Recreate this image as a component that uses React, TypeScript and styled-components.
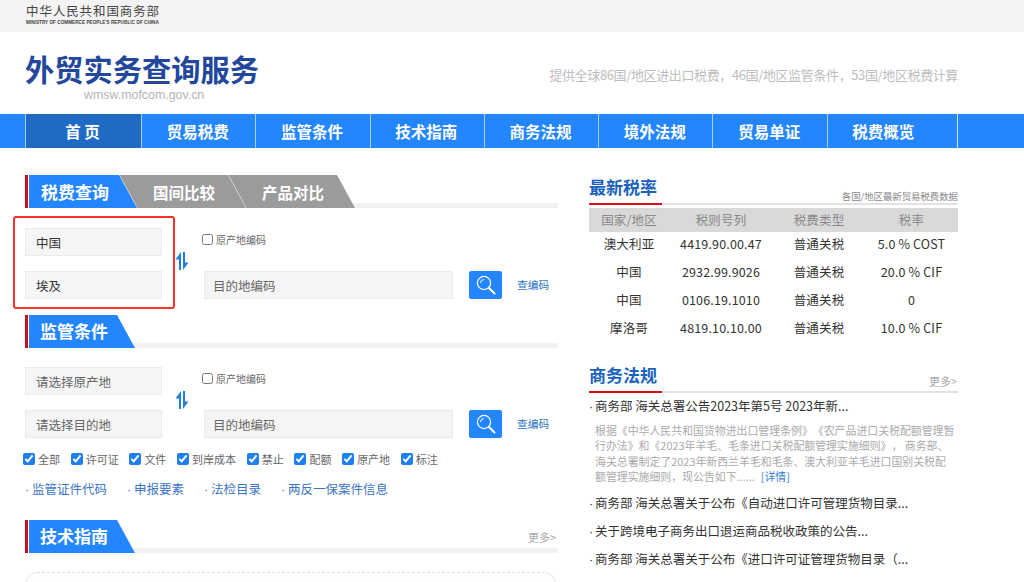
import React from "react";
import styled, { createGlobalStyle } from "styled-components";

const Global = createGlobalStyle`
  html, body { margin: 0; padding: 0; height: 582px; overflow: hidden; background: #fff; }
  body { font-family: "Noto Sans CJK SC", "Liberation Sans", sans-serif; color: #333; text-spacing-trim: space-all; }
  * { box-sizing: border-box; }
`;

const Page = styled.div`
  position: relative;
  width: 1024px;
  height: 582px;
  overflow: hidden;
`;

const TopBar = styled.div`
  height: 32px;
  background: #f3f3f3;
  padding: 3px 0 0 26px;
`;
const MinistryName = styled.div`
  font-size: 12.5px;
  line-height: 15px;
  letter-spacing: 0.9px;
  color: #444;
  white-space: nowrap;
`;
const MinistrySub = styled.div`
  font-family: "Liberation Sans", sans-serif;
  font-size: 4.7px;
  line-height: 8px;
  margin-top: 1px;
  font-weight: 700;
  color: #444;
  white-space: nowrap;
`;

const Header = styled.header`
  height: 82px;
  width: 958px;
  padding-left: 25px;
  display: flex;
  justify-content: space-between;
`;
const Brand = styled.div`
  padding-top: 17px;
`;
const BrandTitle = styled.div`
  font-size: 29.25px;
  line-height: 38px;
  font-weight: 700;
  color: #22479b;
  white-space: nowrap;
`;
const BrandUrl = styled.div`
  font-family: "Liberation Sans", sans-serif;
  font-size: 12.4px;
  line-height: 15px;
  margin: 1px 0 0 59px;
  color: #b4b4b4;
`;
const Slogan = styled.div`
  font-size: 13px;
  line-height: 20px;
  letter-spacing: -0.38px;
  padding-top: 33px;
  color: #bdbdbd;
  white-space: nowrap;
`;

const Nav = styled.nav`
  height: 34px;
  background: #2386ff;
  padding-left: 25px;
  display: flex;
`;
const NavItem = styled.div<{ $active?: boolean; $wide?: boolean }>`
  width: ${(p) => (p.$wide ? "131px" : p.$active ? "116px" : "114.3px")};
  padding-right: ${(p) => (p.$wide ? "18px" : "2px")};
  border-left: 1px solid #a9cff9;
  border-right: ${(p) => (p.$wide ? "1px solid #cfe3fb" : "none")};
  background: ${(p) => (p.$active ? "#1f6bc4" : "transparent")};
  color: #fff;
  font-size: 15.5px;
  font-weight: 700;
  line-height: 34px;
  text-align: center;
  white-space: nowrap;
`;

const Main = styled.main`
  display: grid;
  grid-template-columns: 533px 369px;
  column-gap: 31px;
  padding: 27px 0 0 25px;
`;
const LeftCol = styled.div`
  display: flex;
  flex-direction: column;
`;
const RightCol = styled.div`
  display: flex;
  flex-direction: column;
`;

const SectionHead = styled.div<{ $top?: number }>`
  position: relative;
  display: flex;
  height: 33px;
  margin-top: ${(p) => p.$top ?? 0}px;
  border-left: 3px solid #c8101c;
  padding-left: 1px;
  background: linear-gradient(#f1f1f1, #f1f1f1) left bottom / 100% 5px no-repeat;
`;
const ActiveTab = styled.div<{ $w: number; $textLeft: number; $lh?: number }>`
  width: ${(p) => p.$w}px;
  height: 33px;
  padding-left: ${(p) => p.$textLeft}px;
  background: #2386ff;
  clip-path: polygon(0 0, calc(100% - 18px) 0, 100% 100%, 0 100%);
  color: #fff;
  font-size: 17px;
  font-weight: 700;
  line-height: ${(p) => p.$lh ?? 34}px;
  white-space: nowrap;
`;
const GreyTab = styled.div`
  width: 127px;
  height: 33px;
  margin-left: -18px;
  padding-left: 34px;
  background: #9b9b9b;
  clip-path: polygon(0.5px 0, calc(100% - 18px) 0, 100% 100%, 18.5px 100%);
  color: #fff;
  font-size: 15.5px;
  font-weight: 700;
  line-height: 34px;
  white-space: nowrap;
`;
const SectionMore = styled.span`
  margin-left: auto;
  align-self: flex-end;
  padding: 0 2px 9px 0;
  font-size: 11px;
  line-height: 14px;
  color: #aaa;
`;

const QueryForm = styled.div<{ $top: number }>`
  display: grid;
  grid-template-columns: 137px 42px 249px 16px 33px 15px auto;
  grid-template-rows: 28px 28px;
  row-gap: 15px;
  margin-top: ${(p) => p.$top}px;
`;
const Field = styled.div<{ $col: number; $row: number; $muted?: boolean }>`
  grid-column: ${(p) => p.$col};
  grid-row: ${(p) => p.$row};
  background: #f5f5f5;
  border: 1px solid #ebebeb;
  padding-left: ${(p) => (p.$col === 1 ? "10px" : "8px")};
  font-size: 12.5px;
  line-height: 27px;
  color: ${(p) => (p.$muted ? "#666" : "#333")};
`;
const SwapCell = styled.div`
  grid-column: 2;
  grid-row: 1 / 3;
  padding: 23px 0 0 13px;
`;
const OriginCheck = styled.label`
  grid-column: 3;
  grid-row: 1;
  display: flex;
  align-items: center;
  gap: 3px;
  margin-left: -2px;
  padding-bottom: 5px;
  font-size: 10px;
  color: #666;
`;
const SmallBox = styled.input`
  width: 11px;
  height: 11px;
  margin: 0;
  accent-color: #1e7fee;
`;
const SearchButton = styled.button`
  grid-column: 5;
  grid-row: 2;
  display: flex;
  align-items: center;
  justify-content: center;
  padding: 0;
  border: none;
  border-radius: 2px;
  background: #2386ff;
`;
const CodeLink = styled.a`
  grid-column: 7;
  grid-row: 2;
  font-size: 10.7px;
  line-height: 28px;
  color: #2a72c4;
`;

const CheckRow = styled.div`
  display: flex;
  gap: 10.7px;
  margin: 15px 0 0 -2px;
`;
const CheckItem = styled.label`
  display: flex;
  align-items: center;
  gap: 3px;
  font-size: 11px;
  line-height: 12px;
  color: #666;
`;
const BlueBox = styled.input`
  width: 12px;
  height: 12px;
  margin: 0;
  accent-color: #1e7fee;
`;
const LinkRow = styled.div`
  display: flex;
  gap: 20px;
  margin-top: 15px;
`;
const QuickLink = styled.a`
  font-size: 12.5px;
  line-height: 18px;
  color: #3c74c4;
  white-space: nowrap;
  &::before {
    content: "·";
    font-family: "Liberation Sans", sans-serif;
    display: inline-block;
    width: 7px;
  }
`;
const DashedCard = styled.div`
  height: 60px;
  margin-top: 19px;
  width: 531px;
  border: 1px dashed #dedede;
  border-radius: 12px;
  background: #fdfdfd;
`;

const PanelHead = styled.div<{ $top?: number }>`
  position: relative;
  display: flex;
  justify-content: space-between;
  align-items: flex-end;
  height: 30px;
  margin-top: ${(p) => p.$top ?? 0}px;
  border-bottom: 2px solid #dfe3e8;
`;
const PanelTitle = styled.div`
  margin-bottom: -2px;
  width: 73px;
  height: 30px;
  border-bottom: 2px solid #d8101c;
  font-size: 17px;
  font-weight: 700;
  line-height: 23px;
  color: #1a62bd;
  white-space: nowrap;
`;
const PanelNote = styled.span`
  font-size: 9.4px;
  line-height: 13px;
  color: #888;
  white-space: nowrap;
`;
const PanelMore = styled.span`
  font-size: 11px;
  line-height: 14px;
  padding: 0 1px 3px 0;
  color: #aaa;
`;

const RateTable = styled.table`
  width: 369px;
  margin-top: 3px;
  border-collapse: collapse;
  table-layout: fixed;
  font-size: 12.5px;
  letter-spacing: 0.15px;
  color: #333;
`;
const Th = styled.th<{ $w: number }>`
  width: ${(p) => p.$w}px;
  height: 24px;
  padding: 0 0 2px;
  background: #d9d9d9;
  font-weight: 400;
  color: #888;
`;
const Td = styled.td`
  height: 28px;
  padding: 0 0 5px;
  text-align: center;
  white-space: nowrap;
`;

const NewsItem = styled.div`
  height: 28px;
  font-size: 12.5px;
  line-height: 28px;
  color: #333;
  white-space: nowrap;
  &::before {
    content: "·";
    font-family: "Liberation Sans", sans-serif;
    display: inline-block;
    width: 6px;
    line-height: 1;
  }
`;
const NewsList = styled.div`
  margin-top: -1px;
`;
const NewsBody = styled.p`
  margin: 3px 0 4px 6px;
  font-size: 10.9px;
  line-height: 15.4px;
  color: #aaa;
  white-space: nowrap;
`;
const DetailLink = styled.a`
  margin-left: 6px;
  color: #3c7fd0;
`;

const Annotation = styled.div`
  position: absolute;
  left: 13px;
  top: 216px;
  width: 162px;
  height: 93px;
  border: 2px solid #f5332a;
  border-radius: 3px;
  pointer-events: none;
`;

const SwapIcon = () => (
  <svg width="14" height="18" viewBox="0 0 14 18" fill="#1f7fe0">
    <path d="M4 18V7.5H0.5L6 0V18Z" />
    <path d="M8 0H10V10.5H13.5L8 18Z" />
  </svg>
);

const SearchIcon = () => (
  <svg width="22" height="22" viewBox="0 0 22 22" fill="none" stroke="#fff">
    <circle cx="9" cy="9" r="6.6" strokeWidth="1.2" />
    <path d="M5.5 9A3.5 3.5 0 0 1 9 5.5" strokeWidth="1" />
    <path d="M14 14L19.5 19.5" strokeWidth="2" strokeLinecap="round" />
  </svg>
);

const Form = ({ a, b, top, muted }: { a: string; b: string; top: number; muted?: boolean }) => (
  <QueryForm $top={top}>
    <Field $col={1} $row={1} $muted={muted}>{a}</Field>
    <Field $col={1} $row={2} $muted={muted}>{b}</Field>
    <SwapCell><SwapIcon /></SwapCell>
    <OriginCheck><SmallBox type="checkbox" />原产地编码</OriginCheck>
    <Field $col={3} $row={2} $muted>目的地编码</Field>
    <SearchButton aria-label="搜索"><SearchIcon /></SearchButton>
    <CodeLink>查编码</CodeLink>
  </QueryForm>
);

const navItems = ["贸易税费", "监管条件", "技术指南", "商务法规", "境外法规", "贸易单证"];
const checks = ["全部", "许可证", "文件", "到岸成本", "禁止", "配额", "原产地", "标注"];
const links = ["监管证件代码", "申报要素", "法检目录", "两反一保案件信息"];
const rows = [
  ["澳大利亚", "4419.90.00.47", "普通关税", "5.0 % COST"],
  ["中国", "2932.99.9026", "普通关税", "20.0 % CIF"],
  ["中国", "0106.19.1010", "普通关税", "0"],
  ["摩洛哥", "4819.10.10.00", "普通关税", "10.0 % CIF"],
];

export default function App() {
  return (
    <Page>
      <Global />
      <TopBar>
        <MinistryName>中华人民共和国商务部</MinistryName>
        <MinistrySub>MINISTRY OF COMMERCE PEOPLE'S REPUBLIC OF CHINA</MinistrySub>
      </TopBar>
      <Header>
        <Brand>
          <BrandTitle>外贸实务查询服务</BrandTitle>
          <BrandUrl>wmsw.mofcom.gov.cn</BrandUrl>
        </Brand>
        <Slogan>提供全球86国/地区进出口税费，46国/地区监管条件，53国/地区税费计算</Slogan>
      </Header>
      <Nav>
        <NavItem $active>首 页</NavItem>
        {navItems.map((n) => <NavItem key={n}>{n}</NavItem>)}
        <NavItem $wide>税费概览</NavItem>
      </Nav>
      <Main>
        <LeftCol>
          <SectionHead>
            <ActiveTab $w={108} $textLeft={12}>税费查询</ActiveTab>
            <GreyTab>国间比较</GreyTab>
            <GreyTab>产品对比</GreyTab>
          </SectionHead>
          <Form a="中国" b="埃及" top={20} />
          <SectionHead $top={16}>
            <ActiveTab $w={106} $textLeft={11} $lh={31}>监管条件</ActiveTab>
          </SectionHead>
          <Form a="请选择原产地" b="请选择目的地" top={19} muted />
          <CheckRow>
            {checks.map((c) => (
              <CheckItem key={c}><BlueBox type="checkbox" defaultChecked />{c}</CheckItem>
            ))}
          </CheckRow>
          <LinkRow>
            {links.map((l) => <QuickLink key={l}>{l}</QuickLink>)}
          </LinkRow>
          <SectionHead $top={21}>
            <ActiveTab $w={106} $textLeft={11} $lh={32}>技术指南</ActiveTab>
            <SectionMore>更多&gt;</SectionMore>
          </SectionHead>
          <DashedCard />
        </LeftCol>
        <RightCol>
          <PanelHead>
            <PanelTitle>最新税率</PanelTitle>
            <PanelNote>各国/地区最新贸易税费数据</PanelNote>
          </PanelHead>
          <RateTable>
            <thead>
              <tr>
                <Th $w={80}>国家/地区</Th>
                <Th $w={104}>税则号列</Th>
                <Th $w={92}>税费类型</Th>
                <Th $w={93}>税率</Th>
              </tr>
            </thead>
            <tbody>
              {rows.map((r, i) => (
                <tr key={i}>{r.map((c, j) => <Td key={j}>{c}</Td>)}</tr>
              ))}
            </tbody>
          </RateTable>
          <PanelHead $top={19}>
            <PanelTitle>商务法规</PanelTitle>
            <PanelMore>更多&gt;</PanelMore>
          </PanelHead>
          <NewsList>
            <NewsItem>商务部 海关总署公告2023年第5号 2023年新...</NewsItem>
            <NewsBody>
              根据《中华人民共和国货物进出口管理条例》《农产品进口关税配额管理暂<br />
              行办法》和《2023年羊毛、毛条进口关税配额管理实施细则》， 商务部、<br />
              海关总署制定了2023年新西兰羊毛和毛条、澳大利亚羊毛进口国别关税配<br />
              额管理实施细则，现公告如下......
              <DetailLink>[详情]</DetailLink>
            </NewsBody>
            <NewsItem>商务部 海关总署关于公布《自动进口许可管理货物目录...</NewsItem>
            <NewsItem>关于跨境电子商务出口退运商品税收政策的公告...</NewsItem>
            <NewsItem>商务部 海关总署关于公布《进口许可证管理货物目录（...</NewsItem>
          </NewsList>
        </RightCol>
      </Main>
      <Annotation />
    </Page>
  );
}
